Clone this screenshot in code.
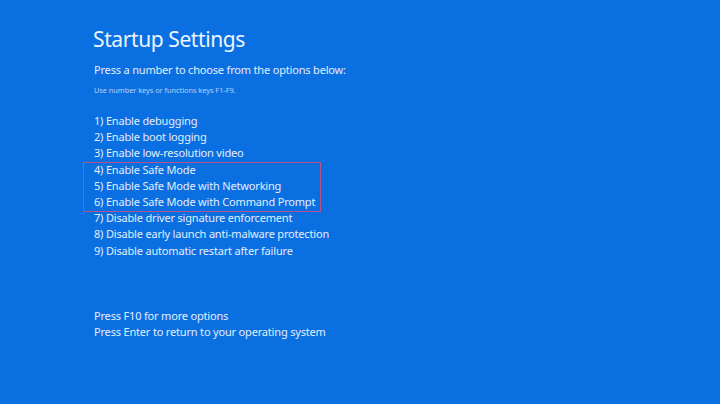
const OPTIONS = [
  "1) Enable debugging",
  "2) Enable boot logging",
  "3) Enable low-resolution video",
  "4) Enable Safe Mode",
  "5) Enable Safe Mode with Networking",
  "6) Enable Safe Mode with Command Prompt",
  "7) Disable driver signature enforcement",
  "8) Disable early launch anti-malware protection",
  "9) Disable automatic restart after failure",
];

export default function App() {
  return (
    <div
      className="w-[720px] h-[404px] overflow-hidden bg-[#0a70e2] text-[#e4edfb] pl-[94px] pt-[25px] tracking-[-0.18px]"
      style={{ fontFamily: '"Noto Sans", "Open Sans", sans-serif' }}
    >
      <h1 className="text-[21px] leading-[28px] tracking-[-0.4px] text-[#eef4fe] -ml-[1px]">Startup Settings</h1>
      <p className="mt-[9px] text-[11px] leading-[16px]">Press a number to choose from the options below:</p>
      <p className="mt-[7px] text-[7.3px] leading-[10px] tracking-normal opacity-75">Use number keys or functions keys F1-F9.</p>

      <div className="mt-[18px] relative">
        <div className="absolute left-[-11px] top-[49px] w-[238px] h-[50px] border border-[#b8508a]" />
        {OPTIONS.map((o) => (
          <p key={o} className="text-[11px] leading-[16.2px]">{o}</p>
        ))}
      </div>

      <div className="mt-[49px]">
        <p className="text-[11px] leading-[16px]">Press F10 for more options</p>
        <p className="text-[11px] leading-[16px]">Press Enter to return to your operating system</p>
      </div>
    </div>
  );
}
